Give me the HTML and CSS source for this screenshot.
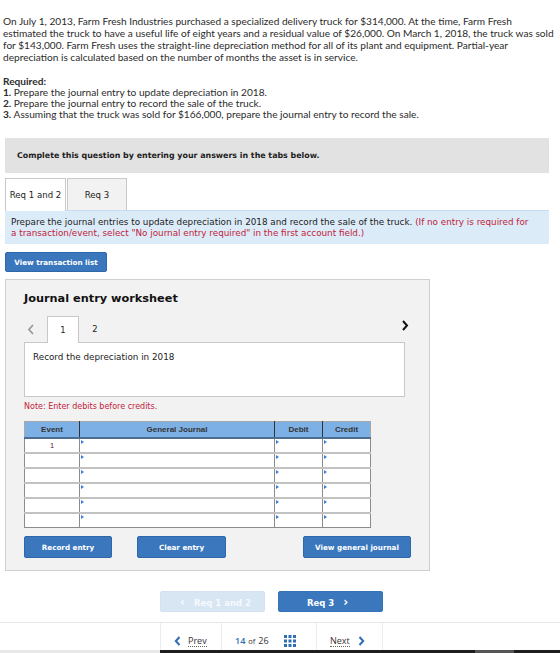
FILE: index.html
```html
<!DOCTYPE html>
<html>
<head>
<meta charset="utf-8">
<link rel="stylesheet" href="styles.css">
</head>
<body>
<div class="page">
  <div class="intro">
    <p class="problem">On July 1, 2013, Farm Fresh Industries purchased a specialized delivery truck for $314,000. At the time, Farm Fresh<br>estimated the truck to have a useful life of eight years and a residual value of $26,000. On March 1, 2018, the truck was sold<br>for $143,000. Farm Fresh uses the straight-line depreciation method for all of its plant and equipment. Partial-year<br>depreciation is calculated based on the number of months the asset is in service.</p>
    <p class="req-title">Required:</p>
    <p class="req"><b>1.</b> Prepare the journal entry to update depreciation in 2018.</p>
    <p class="req"><b>2.</b> Prepare the journal entry to record the sale of the truck.</p>
    <p class="req"><b>3.</b> Assuming that the truck was sold for $166,000, prepare the journal entry to record the sale.</p>
  </div>

  <div class="instr">Complete this question by entering your answers in the tabs below.</div>

  <div class="tabs">
    <div class="tab active">Req 1 and 2</div>
    <div class="tab">Req 3</div>
  </div>
  <div class="info">Prepare the journal entries to update depreciation in 2018 and record the sale of the truck. <span class="red">(If no entry is required for<br>a transaction/event, select "No journal entry required" in the first account field.)</span></div>

  <div class="list-row"><button class="btn btn-list">View transaction list</button></div>

  <div class="worksheet">
    <h2 class="ws-title">Journal entry worksheet</h2>
    <div class="ws-nav">
      <span class="chev chev-prev"><svg width="8" height="11" viewBox="0 0 8 11"><path d="M6 1 L2 5.5 L6 10" fill="none" stroke="#9a9a9a" stroke-width="1.8"/></svg></span>
      <div class="ws-tab active">1</div>
      <div class="ws-tab">2</div>
      <span class="chev chev-next"><svg width="8" height="11" viewBox="0 0 8 11"><path d="M2 1 L6 5.5 L2 10" fill="none" stroke="#111" stroke-width="2"/></svg></span>
    </div>
    <div class="desc">Record the depreciation in 2018</div>
    <p class="note">Note: Enter debits before credits.</p>
    <table class="journal">
      <colgroup><col class="c-ev"><col class="c-gj"><col class="c-dr"><col class="c-cr"></colgroup>
      <thead>
        <tr><th>Event</th><th>General Journal</th><th>Debit</th><th>Credit</th></tr>
      </thead>
      <tbody>
        <tr><td class="ev">1</td><td class="in"></td><td class="in"></td><td class="in"></td></tr>
        <tr><td class="ev"></td><td class="in"></td><td class="in"></td><td class="in"></td></tr>
        <tr><td class="ev"></td><td class="in"></td><td class="in"></td><td class="in"></td></tr>
        <tr><td class="ev"></td><td class="in"></td><td class="in"></td><td class="in"></td></tr>
        <tr><td class="ev"></td><td class="in"></td><td class="in"></td><td class="in"></td></tr>
        <tr><td class="ev"></td><td class="in"></td><td class="in"></td><td class="in"></td></tr>
      </tbody>
    </table>
    <div class="ws-buttons">
      <button class="btn btn-record">Record entry</button>
      <button class="btn btn-clear">Clear entry</button>
      <button class="btn btn-view">View general journal</button>
    </div>
  </div>

  <div class="req-nav">
    <button class="btn nav-btn disabled"><span class="arr">&lsaquo;</span> Req 1 and 2</button>
    <button class="btn nav-btn">Req 3 <span class="arr">&rsaquo;</span></button>
  </div>

  <div class="pager">
    <div class="pg pg-prev"><svg width="7" height="10" viewBox="0 0 7 10"><path d="M5.5 1 L1.8 5 L5.5 9" fill="none" stroke="#2f6db5" stroke-width="2"/></svg><span class="lnk">Prev</span></div>
    <div class="pg pg-count"><b>14</b> <span class="of">of</span> 26
      <svg class="grid" width="12" height="12" viewBox="0 0 12 12" fill="#2f6db5">
        <rect x="0" y="0" width="3" height="3"/><rect x="4.5" y="0" width="3" height="3"/><rect x="9" y="0" width="3" height="3"/>
        <rect x="0" y="4.5" width="3" height="3"/><rect x="4.5" y="4.5" width="3" height="3"/><rect x="9" y="4.5" width="3" height="3"/>
        <rect x="0" y="9" width="3" height="3"/><rect x="4.5" y="9" width="3" height="3"/><rect x="9" y="9" width="3" height="3"/>
      </svg>
    </div>
    <div class="pg pg-next"><span class="lnk">Next</span><svg width="7" height="10" viewBox="0 0 7 10"><path d="M1.5 1 L5.2 5 L1.5 9" fill="none" stroke="#2f6db5" stroke-width="2"/></svg></div>
  </div>
  <div class="bottom-bar"><div class="bb-left"></div><div class="bb-dark"></div><div class="bb-mid"></div><div class="bb-dark2"></div></div>
</div>
</body>
</html>
```

FILE: styles.css
```css
html, body { margin: 0; padding: 0; background: #fff; }
body { width: 560px; height: 653px; overflow: hidden; }

.intro { padding: 15px 3px 0 3px; font-family: Lato, "Open Sans", sans-serif; color: #2b2b2b; }
.intro p { margin: 0; }
.problem { font-size: 10.15px; line-height: 12px; white-space: nowrap; }
.req-title { margin-top: 13px !important; font-size: 10.15px; line-height: 11px; font-weight: 700; }
.req { font-size: 10.15px; line-height: 11px; }

.instr {
  margin: 18px 11px 0 5px; height: 35px; background: #e2e2e2;
  font-family: "DejaVu Sans", sans-serif; font-weight: 700; font-size: 7.9px; color: #1d1d1d;
  display: flex; align-items: center; padding-left: 12px; box-sizing: border-box;
}

.tabs { display: flex; margin: 5px 0 0 5px; height: 32px; }
.tab {
  box-sizing: border-box; height: 32px; border: 1px solid #c9c9c9; border-bottom: none;
  font-family: "DejaVu Sans", sans-serif; font-size: 8.6px; color: #222;
  display: flex; align-items: center; justify-content: center;
  background: #f2f2f2; width: 60px; margin-left: 1px;
}
.tab.active { background: #fff; width: 61px; margin-left: 0; position: relative; z-index: 1; height: 33px; }

.info {
  margin: 0 11px 0 5px; background: #dcebf8; border-top: 1px solid #c7dcef;
  padding: 6px 6px 5px 6px; height: 34px; box-sizing: border-box;
  font-family: "DejaVu Sans", sans-serif; font-size: 8.8px; line-height: 11px; color: #222; white-space: nowrap;
}
.info .red { color: #c2223a; }

.list-row { margin: 8px 0 0 5px; height: 20px; }
.btn {
  font-family: "DejaVu Sans", sans-serif; font-weight: 700; font-size: 7.2px; color: #fff;
  background: #3a77bd; border: 1px solid #2f68aa; border-radius: 2px; padding: 0; cursor: pointer;
}
.btn-list { width: 102px; height: 20px; display: block; }

.worksheet {
  margin: 7px 0 0 5px; width: 425px; height: 292px; box-sizing: border-box;
  background: #f2f2f2; border: 1px solid #cfcfcf; padding: 12px 0 0 18px;
}
.ws-title { margin: 0; font-family: "DejaVu Sans", sans-serif; font-size: 11.3px; font-weight: 700; color: #111; line-height: 14px; }

.ws-nav { display: flex; align-items: flex-end; margin-top: 10px; height: 26px; width: 381px; }
.chev { display: flex; align-items: center; height: 26px; }
.chev-prev { width: 23px; padding-left: 3px; box-sizing: border-box; }
.chev-next { margin-left: auto; margin-right: -4px; padding-bottom: 4px; }
.ws-tab {
  width: 32px; height: 26px; box-sizing: border-box; display: flex; align-items: center; justify-content: center;
  font-family: "DejaVu Sans", sans-serif; font-size: 8.4px; color: #222;
}
.ws-tab.active { background: #fff; border: 1px solid #c8c8c8; border-bottom: none; height: 27px; margin-bottom: -1px; position: relative; z-index: 1; }

.desc {
  width: 381px; height: 55px; box-sizing: border-box; background: #fff; border: 1px solid #c8c8c8;
  padding: 9px 8px; font-family: "DejaVu Sans", sans-serif; font-size: 8.8px; color: #222;
}
.note { margin: 5px 0 0 0; font-family: "DejaVu Sans", sans-serif; font-size: 8px; color: #c2223a; line-height: 9px; }

.journal {
  margin-top: 10px; border-collapse: collapse; table-layout: fixed; width: 347px;
  font-family: "Liberation Sans", Arial, sans-serif; background: #fff;
}
.c-ev { width: 55px; }
.c-gj { width: 195px; }
.c-dr { width: 48px; }
.c-cr { width: 48px; }
.journal thead tr { height: 16px; }
.journal th {
  background: #7db0e4; padding: 0; font-size: 8px; font-weight: 700; color: #333; line-height: 9px;
  border: 1px solid #333; border-top: 1px solid #a9a9a9; border-bottom: 2px solid #4d6e93;
}
.journal th:first-child { border-left: 1px solid #a9a9a9; }
.journal th:last-child { border-right: 1px solid #a9a9a9; }
.journal tbody tr { height: 15px; }
.journal td {
  padding: 0; border: 1px solid #8c8c8c; border-top: 2px solid #c2c2c2;
  font-size: 7.5px; line-height: 8px; color: #333; vertical-align: top;
}
.journal td.ev { text-align: center; padding-top: 3px; color: #5a2030; }
.journal td.in::before {
  content: ""; display: block; width: 0; height: 0; margin: 1px 0 0 1px;
  border-left: 3px solid #3b7dd8; border-top: 2px solid transparent; border-bottom: 2px solid transparent;
}
.journal tbody tr:first-child td { border-top: none; }

.ws-buttons { display: flex; margin-top: 8px; width: 387px; }
.ws-buttons .btn { height: 22px; }
.btn-record { width: 88px; }
.btn-clear { width: 89px; margin-left: 25px; }
.btn-view { width: 108px; margin-left: auto; }

.req-nav { display: flex; gap: 13px; margin: 20px 0 0 160px; }
.nav-btn { width: 105px; height: 21px; font-size: 8.5px; border-color: #3574b8; }
.nav-btn .arr { font-size: 12px; margin: 0 6px; }
.nav-btn.disabled { background: #d8e5f3; border-color: #d3e1f0; color: #f6f9fd; }

.pager {
  margin-top: 10px; border-top: 1px solid #e6e6e6; height: 27px; padding-left: 160px;
  display: flex; font-family: "Open Sans", "Liberation Sans", sans-serif; font-size: 9px; color: #333;
}
.pg { display: flex; align-items: center; border-left: 1px solid #ececec; height: 27px; box-sizing: border-box; padding-top: 8px; }
.pg-prev { width: 61px; padding-left: 13px; gap: 7px; }
.pg-count { width: 95px; padding-left: 13px; gap: 3px; }
.pg-count b { color: #2f6db5; font-weight: 600; }
.pg-count .of { font-size: 7.5px; }
.pg-count .grid { margin-left: 12px; }
.pg-next { width: 67px; padding-left: 13px; gap: 8px; border-right: 1px solid #ececec; }
.lnk { border-bottom: 1px dotted #666; line-height: 11px; }

.bottom-bar { display: flex; height: 3px; }
.bb-left { width: 160px; background: #e8e8e8; }
.bb-dark { width: 315px; background: #1e1e1e; }
.bb-mid { width: 39px; background: #555; }
.bb-dark2 { flex: 1; background: #1e1e1e; }
```
